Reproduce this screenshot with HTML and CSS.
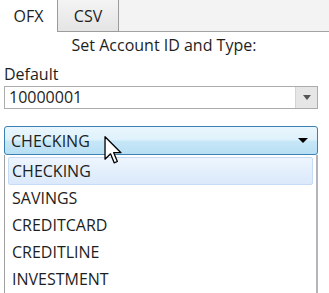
FILE: index.html
```html
<!DOCTYPE html>
<html lang="en">

<head>
    <meta charset="UTF-8">
    <meta name="viewport" content="width=device-width, initial-scale=1.0">
    <title>Export</title>
    <link rel="stylesheet" href="styles.css">
</head>

<body>
    <div class="tabs">
        <div class="tab active">OFX</div>
        <div class="tab">CSV</div>
        <div class="tab-rest"></div>
    </div>
    <div class="page">
        <div class="caption">Set Account ID and Type:</div>
        <div class="label">Default</div>
        <div class="textbox">
            <span class="value">10000001</span>
            <span class="drop"><i class="arrow gray"></i></span>
        </div>
        <div class="combo">
            <span class="value">CHECKING</span>
            <i class="arrow"></i>
            <svg class="cursor" viewBox="0 0 12 20" width="18" height="29">
                <path d="M0.5 0.5 L0.5 16 L4.3 12.3 L6.8 18.5 L9 17.6 L6.5 11.5 L11.5 11.5 Z" fill="#fff" stroke="#000" stroke-width="0.9" stroke-linejoin="round"/>
            </svg>
        </div>
        <ul class="list">
            <li class="sel">CHECKING</li>
            <li>SAVINGS</li>
            <li>CREDITCARD</li>
            <li>CREDITLINE</li>
            <li>INVESTMENT</li>
        </ul>
    </div>
</body>

</html>
```

FILE: styles.css
```css
body {
    margin: 0;
    background-color: #fff;
    font-family: "Open Sans", "Noto Sans", sans-serif;
    font-size: 16px;
    color: #1e1e1e;
}

.tabs {
    display: flex;
    height: 32px;
}

.tab {
    width: 57px;
    padding-top: 2px;
    text-align: center;
    line-height: 28px;
}

.tab.active {
    background-color: #fff;
}

.tabs .tab:nth-child(2) {
    width: 60px;
    border: 1px solid #9c9c9c;
    border-top: 0;
    background: linear-gradient(#f4f4f4, #e4e4e4);
}

.tab-rest {
    flex: 1;
    background-color: #f3f3f3;
    border-bottom: 1px solid #a3a3a3;
}

.page {
    padding: 0 11px 0 4px;
}

.caption {
    text-align: center;
    line-height: 22px;
    padding: 2px 0 0 6px;
}

.label {
    margin-top: 7px;
    line-height: 22px;
}

.textbox {
    display: flex;
    height: 21px;
    margin-top: 1px;
    border: 1px solid #acacac;
}

.textbox .value {
    flex: 1;
    padding-left: 4px;
    line-height: 20px;
}

.drop {
    width: 21px;
    display: flex;
    align-items: center;
    justify-content: center;
    background-color: #e6e6e6;
    border-left: 1px solid #d4d4d4;
}

.arrow {
    width: 0;
    height: 0;
    border-left: 5px solid transparent;
    border-right: 5px solid transparent;
    border-top: 5px solid #000;
}

.arrow.gray {
    border-left-width: 4px;
    border-right-width: 4px;
    border-top-color: #555;
}

.combo {
    position: relative;
    display: flex;
    align-items: center;
    height: 27px;
    margin-top: 17px;
    padding: 0 9px 0 6px;
    border: 1px solid #3c7fb1;
    border-radius: 3px;
    background: linear-gradient(#eaf6fd, #def1fb 48%, #c7e7f8 52%, #b8dff4);
}

.combo .value {
    flex: 1;
}

.cursor {
    position: absolute;
    left: 99px;
    top: 9px;
}

.list {
    margin: 0;
    padding: 2px 3px 0 3px;
    height: 136px;
    overflow: hidden;
    list-style: none;
    border-left: 1px solid #a0a0a0;
    border-right: 2px solid #b4b4bc;
}

.list li {
    height: 27px;
    line-height: 27px;
    padding-left: 4px;
}

.list li.sel {
    height: 26px;
    line-height: 26px;
    padding-left: 3px;
    border: 1px solid #c6dcf4;
    border-radius: 2px;
    background: linear-gradient(#eef5fd, #dae9fb);
}
```
